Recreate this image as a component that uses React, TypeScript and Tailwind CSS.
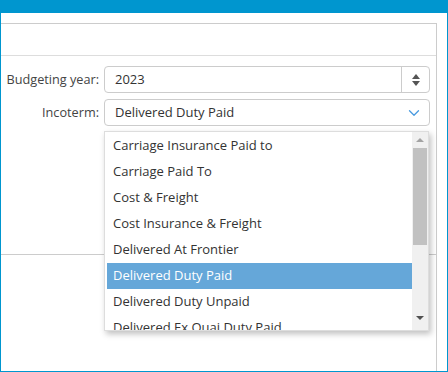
import { ChevronDown } from "lucide-react";

const options = [
  "Carriage Insurance Paid to",
  "Carriage Paid To",
  "Cost & Freight",
  "Cost Insurance & Freight",
  "Delivered At Frontier",
  "Delivered Duty Paid",
  "Delivered Duty Unpaid",
  "Delivered Ex Quai Duty Paid",
];

export default function App() {
  return (
    <div
      className="w-[448px] h-[372px] bg-white border-x border-b border-[#0096cf] flex flex-col overflow-hidden"
      style={{ fontFamily: '"Open Sans", sans-serif' }}
    >
      <div className="h-[13px] bg-[#0096cf] shrink-0" />
      <div className="flex-1 flex pt-[10px] pr-[10px]">
        <div className="flex-1 border-t border-r border-[#cccccc] flex flex-col">
          {/* header */}
          <div className="h-[32px] border-b border-[#dddddd]" />
          {/* form */}
          <div className="relative h-[199px] border-b border-[#cccccc] pt-[10px]">
            <div className="flex items-center h-[27px]">
              <label className="w-[103px] text-right text-[12.7px] text-[#444] pr-[5px]">Budgeting year:</label>
              <div className="w-[326px] h-[27px] border border-[#cccccc] rounded-[4px] flex items-center">
                <span className="flex-1 pl-[10px] text-[13px] text-[#333]">2023</span>
                <div className="w-[28px] h-full border-l border-[#cccccc] flex flex-col items-center justify-center gap-[2px]">
                  <span className="w-0 h-0 border-x-[4px] border-x-transparent border-b-[5px] border-b-[#555]" />
                  <span className="w-0 h-0 border-x-[4px] border-x-transparent border-t-[5px] border-t-[#555]" />
                </div>
              </div>
            </div>
            <div className="flex items-center h-[27px] mt-[6px]">
              <label className="w-[103px] text-right text-[12.7px] text-[#444] pr-[5px]">Incoterm:</label>
              <div className="w-[326px] h-[27px] border border-[#cccccc] rounded-[4px] flex items-center">
                <span className="flex-1 pl-[10px] text-[13px] text-[#333]">Delivered Duty Paid</span>
                <ChevronDown className="w-[18px] h-[18px] text-[#4a9be0] mr-[6px]" strokeWidth={1.75} />
              </div>
            </div>
            {/* dropdown */}
            <div className="absolute left-[103px] top-[75px] w-[325px] h-[200px] bg-white border border-[#dddddd] shadow-[2px_3px_6px_rgba(0,0,0,0.25)] flex z-10">
              <div className="flex-1 overflow-hidden pl-[2px] pt-[1px]">
                {options.map((o) => (
                  <div
                    key={o}
                    className={`h-[26px] flex items-center pl-[6px] text-[13px] whitespace-nowrap ${
                      o === "Delivered Duty Paid" ? "bg-[#65a7d9] text-white" : "text-[#333]"
                    }`}
                  >
                    {o}
                  </div>
                ))}
              </div>
              <div className="w-[16px] bg-[#f0f0f0] flex flex-col items-center">
                <div className="h-[16px] flex items-center justify-center">
                  <span className="w-0 h-0 border-x-[4px] border-x-transparent border-b-[4px] border-b-[#a3a3a3]" />
                </div>
                <div className="w-[14px] h-[97px] bg-[#c1c1c1]" />
                <div className="flex-1" />
                <div className="h-[16px] flex items-center justify-center mb-[4px]">
                  <span className="w-0 h-0 border-x-[4px] border-x-transparent border-t-[4px] border-t-[#505050]" />
                </div>
              </div>
            </div>
          </div>
          <div className="flex-1" />
        </div>
      </div>
    </div>
  );
}
